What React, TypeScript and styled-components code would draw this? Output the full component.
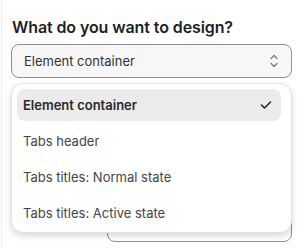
import React from "react";
import styled, { createGlobalStyle } from "styled-components";

const Global = createGlobalStyle`
  html, body { margin: 0; padding: 0; background: #fff; }
  body { font-family: Inter, "Noto Sans", sans-serif; -webkit-font-smoothing: antialiased; }
`;

const Panel = styled.div`
  margin-left: 1px;
  border-left: 1px solid #ededed;
  height: 248px;
  box-sizing: border-box;
  padding: 17px 12px 0 9px;
  overflow: hidden;
`;

const Heading = styled.div`
  font-size: 16px;
  font-weight: 600;
  line-height: 20px;
  letter-spacing: -0.1px;
  color: #1f1f1f;
  margin: 0 0 7px 1px;
`;

const Field = styled.div`
  position: relative;
`;

const Select = styled.div`
  height: 34px;
  box-sizing: border-box;
  border: 1px solid #8e8e8e;
  border-radius: 8px;
  background: #f7f7f7;
  display: flex;
  align-items: center;
  justify-content: space-between;
  padding: 0 12px 0 12px;
  font-size: 13px;
  color: #333;
`;

const Menu = styled.div`
  position: absolute;
  top: 39px;
  left: 0;
  right: 0;
  z-index: 2;
  box-sizing: border-box;
  border: 1px solid #e2e2e2;
  border-radius: 12px;
  background: #fff;
  box-shadow: 0 3px 6px rgba(0, 0, 0, 0.16);
  padding: 5px 10px 3px 5px;
  display: flex;
  flex-direction: column;
  gap: 4px;
`;

const Item = styled.div<{ $active?: boolean }>`
  height: 32px;
  border-radius: 8px;
  display: flex;
  align-items: center;
  justify-content: space-between;
  padding: 0 9px 0 6px;
  font-size: 13px;
  font-weight: ${(p) => (p.$active ? 600 : 400)};
  color: ${(p) => (p.$active ? "#2a2a2a" : "#444")};
  background: ${(p) => (p.$active ? "#ebebeb" : "transparent")};
`;

const LowerRow = styled.div`
  margin-top: 130px;
  display: flex;
  align-items: center;
  justify-content: space-between;
`;

const Marker = styled.div`
  width: 2px;
  height: 4px;
  margin-bottom: 12px;
  background: #b07a2a;
`;

const Input = styled.div`
  width: 185px;
  height: 34px;
  box-sizing: border-box;
  border: 1px solid #8e8e8e;
  border-radius: 8px;
  background: #fff;
`;

const Chevrons = () => (
  <svg width="10" height="16" viewBox="0 0 10 16" fill="none" stroke="#7a7a7a" strokeWidth="1.3" strokeLinecap="round" strokeLinejoin="round">
    <path d="M2 5.5 L5 2.5 L8 5.5" />
    <path d="M2 10.5 L5 13.5 L8 10.5" />
  </svg>
);

const Check = () => (
  <svg width="12" height="10" viewBox="0 0 12 10" fill="none" stroke="#222" strokeWidth="1.5" strokeLinecap="round" strokeLinejoin="round">
    <path d="M1.5 5 L4.5 8 L10.5 2" />
  </svg>
);

const options = [
  "Element container",
  "Tabs header",
  "Tabs titles: Normal state",
  "Tabs titles: Active state",
];

export default function App() {
  return (
    <>
      <Global />
      <Panel>
        <Heading>What do you want to design?</Heading>
        <Field>
          <Select>
            <span>Element container</span>
            <Chevrons />
          </Select>
          <Menu>
            {options.map((o, i) => (
              <Item key={o} $active={i === 0}>
                <span>{o}</span>
                {i === 0 && <Check />}
              </Item>
            ))}
          </Menu>
        </Field>
        <LowerRow>
          <Marker />
          <Input />
        </LowerRow>
      </Panel>
    </>
  );
}
